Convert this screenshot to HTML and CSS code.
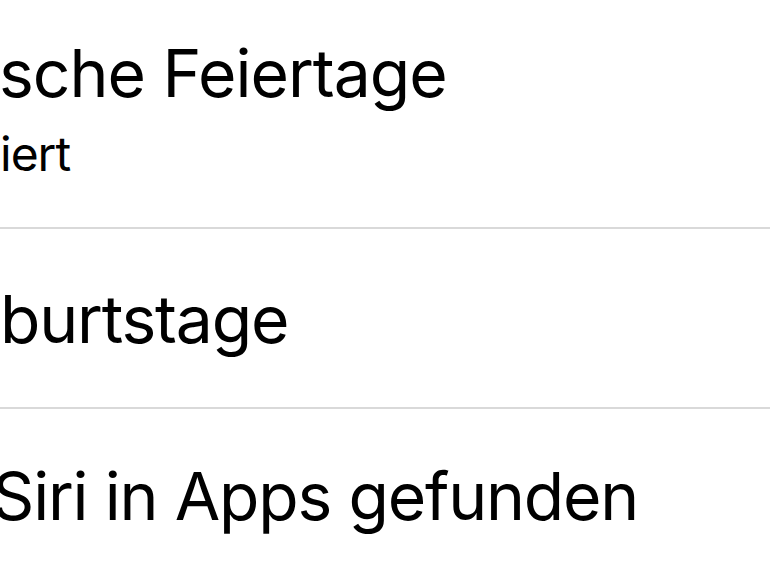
FILE: index.html
```html
<!DOCTYPE html>
<html lang="de">
<head>
    <meta charset="UTF-8">
    <meta name="viewport" content="width=device-width, initial-scale=1.0">
    <title>Kalender</title>
    <link rel="stylesheet" href="styles.css">
</head>
<body>
    <div class="list">
        <div class="row first">
            <div class="title">sche Feiertage</div>
            <div class="subtitle">iert</div>
        </div>
        <div class="row">
            <div class="title">burtstage</div>
        </div>
        <div class="row last">
            <div class="title siri">Siri in Apps gefunden</div>
        </div>
    </div>
</body>
</html>
```
FILE: styles.css
```css
body {
    margin: 0;
    background-color: #fff;
    color: #000;
    font-family: Inter, "Noto Sans", sans-serif;
    overflow: hidden;
}
.list {
    width: 770px;
    height: 578px;
    overflow: hidden;
}
.row {
    height: 178px;
    border-bottom: 2px solid #d9d9d9;
}
.row.last {
    border-bottom: none;
}
.row.first {
    height: 227px;
}
.title {
    font-size: 66px;
    line-height: 66px;
    letter-spacing: -1.2px;
    padding-top: 57px;
    white-space: nowrap;
}
.row.first .title {
    padding-top: 40px;
    letter-spacing: -1px;
    margin-left: -1px;
}
.subtitle {
    font-size: 48px;
    line-height: 48px;
    letter-spacing: -1px;
    padding-top: 24px;
}
.siri {
    padding-top: 54px;
    margin-left: -8px;
}
```
